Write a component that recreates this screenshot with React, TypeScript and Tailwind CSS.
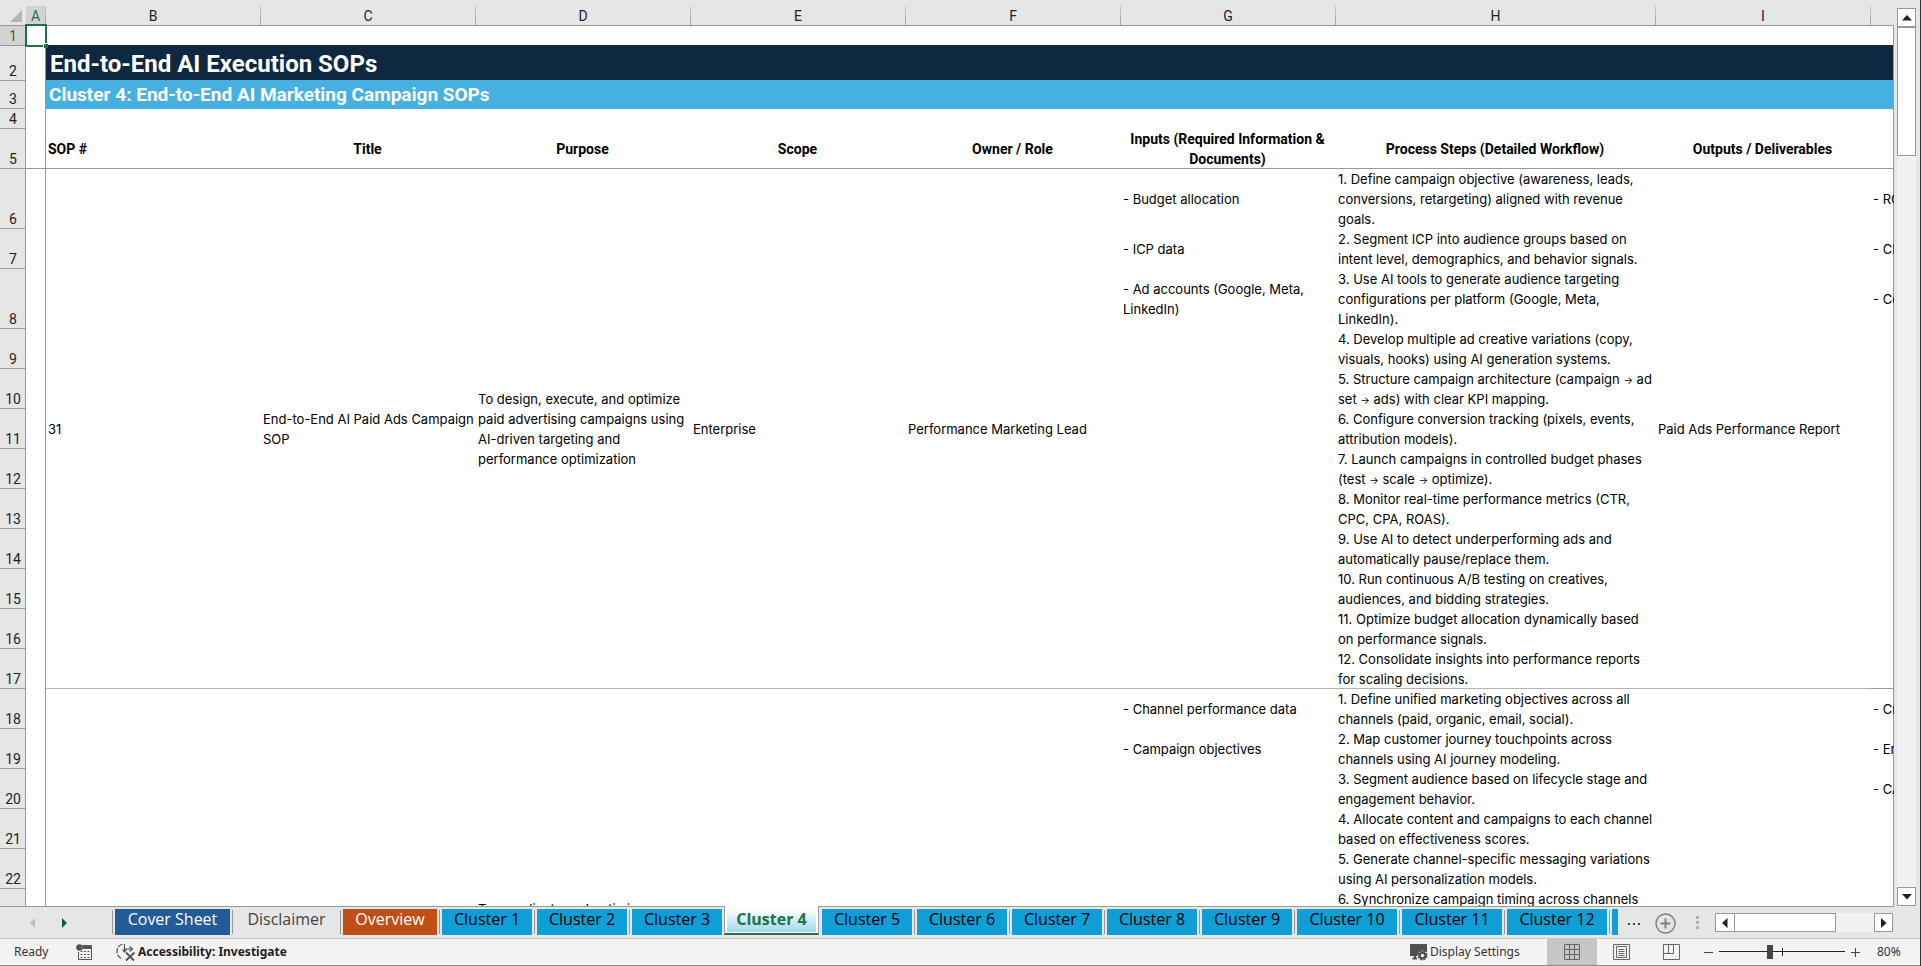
import React from 'react';
import clsx from 'clsx';

const columns = [
  { letter: 'A', width: 'w-[20px]' },
  { letter: 'B', width: 'w-[215px]' },
  { letter: 'C', width: 'w-[215px]' },
  { letter: 'D', width: 'w-[215px]' },
  { letter: 'E', width: 'w-[215px]' },
  { letter: 'F', width: 'w-[215px]' },
  { letter: 'G', width: 'w-[215px]' },
  { letter: 'H', width: 'w-[320px]' },
  { letter: 'I', width: 'w-[215px]' },
  { letter: '', width: '' },
];

const headings = [
  'SOP #',
  'Title',
  'Purpose',
  'Scope',
  'Owner / Role',
  'Inputs (Required Information &\nDocuments)',
  'Process Steps (Detailed Workflow)',
  'Outputs / Deliverables',
];

interface StepRow {
  input?: string;
  step: string;
  kpi?: string;
  tall?: boolean;
}

const paidAdsRows: StepRow[] = [
  {
    input: '- Budget allocation',
    step: '1. Define campaign objective (awareness, leads,\nconversions, retargeting) aligned with revenue\ngoals.',
    kpi: '- ROAS',
    tall: true,
  },
  { input: '- ICP data', step: '2. Segment ICP into audience groups based on\nintent level, demographics, and behavior signals.', kpi: '- CPA' },
  {
    input: '- Ad accounts (Google, Meta,\nLinkedIn)',
    step: '3. Use AI tools to generate audience targeting\nconfigurations per platform (Google, Meta,\nLinkedIn).',
    kpi: '- Conversion',
    tall: true,
  },
  { step: '4. Develop multiple ad creative variations (copy,\nvisuals, hooks) using AI generation systems.' },
  { step: '5. Structure campaign architecture (campaign → ad\nset → ads) with clear KPI mapping.' },
  { step: '6. Configure conversion tracking (pixels, events,\nattribution models).' },
  { step: '7. Launch campaigns in controlled budget phases\n(test → scale → optimize).' },
  { step: '8. Monitor real-time performance metrics (CTR,\nCPC, CPA, ROAS).' },
  { step: '9. Use AI to detect underperforming ads and\nautomatically pause/replace them.' },
  { step: '10. Run continuous A/B testing on creatives,\naudiences, and bidding strategies.' },
  { step: '11. Optimize budget allocation dynamically based\non performance signals.' },
  { step: '12. Consolidate insights into performance reports\nfor scaling decisions.' },
];

const multiChannelRows: StepRow[] = [
  {
    input: '- Channel performance data',
    step: '1. Define unified marketing objectives across all\nchannels (paid, organic, email, social).',
    kpi: '- Cross',
  },
  { input: '- Campaign objectives', step: '2. Map customer journey touchpoints across\nchannels using AI journey modeling.', kpi: '- Engagement' },
  { step: '3. Segment audience based on lifecycle stage and\nengagement behavior.', kpi: '- CAC' },
  { step: '4. Allocate content and campaigns to each channel\nbased on effectiveness scores.' },
  { step: '5. Generate channel-specific messaging variations\nusing AI personalization models.' },
  { step: '6. Synchronize campaign timing across channels' },
];

const sheets = [
  { name: 'Cover Sheet', look: 'w-[115px] bg-[#215c98] text-white' },
  { name: 'Disclaimer', look: 'w-[103px] text-[#444444]' },
  { name: 'Overview', look: 'w-[94px] bg-[#c04f15] text-white' },
  ...[1, 2, 3, 4, 5, 6, 7, 8, 9].map((n) => ({ name: `Cluster ${n}`, look: 'w-[90px] bg-[#0f9ed5] text-black' })),
  ...[10, 11, 12].map((n) => ({ name: `Cluster ${n}`, look: 'w-[100px] bg-[#0f9ed5] text-black' })),
];

const RowHeader: React.FC<{ n: number; selected?: boolean }> = ({ n, selected }) => (
  <th
    scope="row"
    className={clsx(
      'px-0 pt-0 pb-px align-bottom text-center font-normal text-[14px] leading-[18px] font-[Roboto,sans-serif] shadow-[inset_-1px_-1px_0_#999999]',
      selected ? 'bg-[#d2d2d2] text-[#217346]' : 'bg-[#e6e6e6] text-[#222222]'
    )}
  >
    {n}
  </th>
);

const MarginCell = () => <td className="p-0 shadow-[inset_-1px_0_0_#999999]" />;

// the arrow glyph is much wider than the letters around it
const StepText: React.FC<{ text: string }> = ({ text }) => (
  <>
    {text.split('→').map((part, i) => (
      <React.Fragment key={i}>
        {i > 0 && <span className="text-[10px] leading-none">→</span>}
        {part}
      </React.Fragment>
    ))}
  </>
);

const KpiCell: React.FC<{ text?: string; last?: boolean }> = ({ text, last }) => (
  <td
    className={clsx(
      'px-[2px] py-0 whitespace-pre overflow-hidden',
      last ? 'shadow-[inset_-1px_-1px_0_#999999]' : 'shadow-[inset_-1px_0_0_#999999]'
    )}
  >
    {text}
  </td>
);

const SheetGrid = () => {
  const [selected] = React.useState('A');

  return (
    <table className="w-full table-fixed border-separate border-spacing-0 bg-white text-[13px] leading-5 text-black font-[Inter,sans-serif]">
      <colgroup>
        <col className="w-[26px]" />
        {columns.map((c, i) => (
          <col key={i} className={c.width} />
        ))}
      </colgroup>
      <thead>
        <tr className="h-[26px] bg-[#e6e6e6]">
          <th className="p-0 shadow-[inset_0_-1px_0_#999999]">
            <button aria-label="Select all" className="flex h-[26px] w-full items-end justify-end pr-1 pb-1">
              <svg width="12" height="12" viewBox="0 0 12 12" fill="#b4b4b4">
                <path d="M12 0v12H0z" />
              </svg>
            </button>
          </th>
          {columns.map((c, i) => (
            <th key={i} scope="col" className="p-0 font-normal shadow-[inset_0_-1px_0_#999999]">
              <div className="flex h-[26px] pt-[6px]">
                <div
                  className={clsx(
                    'flex-1 text-center text-[14px] leading-5 font-[Roboto,sans-serif]',
                    c.letter === selected ? 'mb-px bg-[#d2d2d2] text-[#217346]' : 'text-[#222222]'
                  )}
                >
                  {c.letter}
                </div>
                {c.letter && <div className="w-px bg-linear-to-b from-[#cccccc] to-[#999999]" />}
              </div>
            </th>
          ))}
        </tr>
      </thead>
      <tbody>
        <tr className="h-[20px]">
          <RowHeader n={1} selected />
          <td className="relative p-0">
            {/* selection frame and fill handle */}
            <div className="absolute -top-[2px] -left-px h-[23px] w-[22px] border-2 border-[#217346]" />
            <div className="absolute -right-[2px] -bottom-[2px] size-[5px] border-t border-l border-white bg-[#217346]" />
          </td>
          <td colSpan={8} className="p-0 shadow-[inset_0_-1px_0_#0e2841]" />
          <td className="p-0 shadow-[inset_-1px_0_0_#999999,inset_0_-1px_0_#0e2841]" />
        </tr>
        <tr className="h-[35px]">
          <RowHeader n={2} />
          <MarginCell />
          <td colSpan={9} className="bg-[#0e2841] px-1 py-0 text-[24px] leading-8 font-bold font-[Roboto,sans-serif] text-white shadow-[inset_-1px_0_0_#999999,inset_0_-1px_0_#46b1e1]">
            End-to-End AI Execution SOPs
          </td>
        </tr>
        <tr className="h-[28px]">
          <RowHeader n={3} />
          <MarginCell />
          <td colSpan={9} className="bg-[#46b1e1] px-[3px] py-0 text-[19px] leading-6 font-bold font-[Roboto,sans-serif] text-white shadow-[inset_-1px_0_0_#999999]">
            Cluster 4: End-to-End AI Marketing Campaign SOPs
          </td>
        </tr>
        <tr className="h-[20px]">
          <RowHeader n={4} />
          <MarginCell />
          <td colSpan={9} className="p-0 shadow-[inset_-1px_0_0_#999999]" />
        </tr>
        <tr className="h-[40px]">
          <RowHeader n={5} />
          <td className="p-0 shadow-[inset_-1px_-1px_0_#999999]" />
          {headings.map((h, i) => (
            <td
              key={h}
              className={clsx(
                'py-0 pr-[2px] whitespace-pre text-[14px] leading-5 font-bold font-[Roboto,sans-serif] shadow-[inset_0_-1px_0_#999999]',
                i === 0 ? 'pl-[2px] text-left' : 'pl-0 text-center'
              )}
            >
              {h}
            </td>
          ))}
          <td className="p-0 shadow-[inset_-1px_-1px_0_#999999]" />
        </tr>

        {paidAdsRows.map((row, i) => {
          const last = i === paidAdsRows.length - 1;
          const merged = 'px-[2px] py-0 whitespace-pre align-middle shadow-[inset_0_-1px_0_#b4b4b4]';
          return (
            <tr key={row.step} className={row.tall ? 'h-[60px]' : 'h-[40px]'}>
              <RowHeader n={i + 6} />
              <MarginCell />
              {i === 0 && (
                <>
                  <td rowSpan={12} className={merged}>31</td>
                  <td rowSpan={12} className={merged}>{'End-to-End AI Paid Ads Campaign\nSOP'}</td>
                  <td rowSpan={12} className={merged}>
                    {'To design, execute, and optimize\npaid advertising campaigns using\nAI-driven targeting and\nperformance optimization'}
                  </td>
                  <td rowSpan={12} className={merged}>Enterprise</td>
                  <td rowSpan={12} className={merged}>Performance Marketing Lead</td>
                </>
              )}
              <td className={clsx('px-[2px] py-0 whitespace-pre', last && 'shadow-[inset_0_-1px_0_#b4b4b4]')}>{row.input}</td>
              <td className={clsx('px-[2px] py-0 whitespace-pre', last && 'shadow-[inset_0_-1px_0_#b4b4b4]')}>
                <StepText text={row.step} />
              </td>
              {i === 0 && <td rowSpan={12} className={merged}>Paid Ads Performance Report</td>}
              <KpiCell text={row.kpi} last={last} />
            </tr>
          );
        })}

        {multiChannelRows.map((row, i) => (
          <tr key={row.step} className="h-[40px]">
            <RowHeader n={i + 18} />
            <MarginCell />
            {i === 0 && (
              <>
                <td rowSpan={6} colSpan={2} />
                <td rowSpan={6} className="px-[2px] pt-0 pb-[10px] align-bottom whitespace-pre">
                  To coordinate and optimize
                </td>
                <td rowSpan={6} colSpan={2} />
              </>
            )}
            <td className="px-[2px] py-0 whitespace-pre">{row.input}</td>
            <td className={clsx('px-[2px] py-0 whitespace-pre', i === 5 && 'align-top')}>{row.step}</td>
            {i === 0 && <td rowSpan={6} />}
            <KpiCell text={row.kpi} />
          </tr>
        ))}
      </tbody>
    </table>
  );
};

const VerticalScrollbar = () => (
  <div className="flex w-[26px] flex-col pt-2 pr-1 pl-[3px] pb-px">
    <button aria-label="Scroll up" className="flex h-[19px] items-center justify-center border border-[#999999] bg-white">
      <svg width="10" height="6" viewBox="0 0 10 6" fill="#222222"><path d="M5 0l5 5.5H0z" /></svg>
    </button>
    <div className="flex-1 bg-[#f1f1f1]">
      <div className="h-[129px] border border-[#999999] bg-white" />
    </div>
    <button aria-label="Scroll down" className="flex h-[19px] items-center justify-center border border-[#999999] bg-white">
      <svg width="10" height="6" viewBox="0 0 10 6" fill="#222222"><path d="M0 0h10L5 5.5z" /></svg>
    </button>
  </div>
);

const SheetTabs = () => {
  const [active, setActive] = React.useState('Cluster 4');
  const activeIndex = sheets.findIndex((s) => s.name === active);

  return (
    <div className='flex h-[31px] shrink-0 text-[16px] leading-5 font-["Open_Sans",sans-serif]'>
      <div className="flex w-[112px] shrink-0 gap-[27px] pt-[11px] pl-[30px]">
        <button aria-label="Previous sheets" className="h-[10px] w-[5px]">
          <svg width="5" height="10" viewBox="0 0 5 10" fill="#c0c0c0"><path d="M5 0v10L0 5z" /></svg>
        </button>
        <button aria-label="Next sheets" className="h-[10px] w-[5px]">
          <svg width="5" height="10" viewBox="0 0 5 10" fill="#0a6332"><path d="M0 0v10l5-5z" /></svg>
        </button>
      </div>
      {sheets.map((s, i) =>
        s.name === active ? (
          <button
            key={s.name}
            className="z-10 -mt-px h-[29px] w-[95px] shrink-0 border-x border-b-2 border-x-[#999999] border-b-[#217346] bg-white px-[2px] pt-[3px] pb-px font-bold text-[#217346]"
          >
            <span className="block h-[23px] bg-linear-to-b from-white to-[#9fd8ee]">{s.name}</span>
          </button>
        ) : (
          <div key={s.name} className="flex shrink-0 gap-[2px] pt-[2px] pr-[2px]">
            <div className={clsx('mt-px h-6 w-px', i === activeIndex + 1 ? 'bg-transparent' : 'bg-[#999999]')} />
            <button onClick={() => setActive(s.name)} className={clsx('flex h-[26px] justify-center whitespace-nowrap', s.look)}>
              {s.name}
            </button>
          </div>
        )
      )}
      <div className="flex shrink-0 gap-[2px] pt-[2px]">
        <div className="mt-px h-6 w-px bg-[#999999]" />
        <div className="h-[26px] w-[6px] bg-[#0f9ed5]" />
      </div>
      <div className="ml-auto flex shrink-0 items-start pr-[27px]">
        <button aria-label="More sheets" className="mt-[16px] mr-[15px] flex gap-[3px]">
          <span className="size-[2px] bg-[#0a6332]" />
          <span className="size-[2px] bg-[#0a6332]" />
          <span className="size-[2px] bg-[#0a6332]" />
        </button>
        <button aria-label="New sheet" className="mt-[6px] mr-[20px]">
          <svg width="21" height="21" viewBox="0 0 21 21" fill="none" stroke="#808080">
            <circle cx="10.5" cy="10.5" r="9.5" strokeWidth="1.5" />
            <path d="M10.5 5.5v10M5.5 10.5h10" strokeWidth="2" />
          </svg>
        </button>
        <div className="mt-[9px] mr-4 flex flex-col gap-[2px]">
          <span className="size-[3px] bg-[#b0b0b0]" />
          <span className="size-[3px] bg-[#b0b0b0]" />
          <span className="size-[3px] bg-[#b0b0b0]" />
        </div>
        <div className="mt-[6px] flex h-[19px] w-[178px] bg-[#f1f1f1]">
          <button aria-label="Scroll left" className="flex w-[20px] items-center justify-center border border-[#999999] bg-white">
            <svg width="6" height="10" viewBox="0 0 6 10" fill="#222222"><path d="M5.5 0v10L0 5z" /></svg>
          </button>
          <div className="flex-1">
            <div className="-ml-px h-full w-[102px] border border-[#999999] bg-white" />
          </div>
          <button aria-label="Scroll right" className="flex w-[19px] items-center justify-center border border-[#999999] bg-white">
            <svg width="6" height="10" viewBox="0 0 6 10" fill="#222222"><path d="M0 0v10l5.5-5z" /></svg>
          </button>
        </div>
      </div>
    </div>
  );
};

const StatusBar = () => (
  <div className="flex h-[28px] shrink-0 items-center border-t border-b border-t-[#c6c6c6] border-b-[#8a8a8a] bg-[#f3f3f3] pl-[14px] text-[12px] text-[#333333]">
    <span className="w-[62px]">Ready</span>
    <button aria-label="Record macro" className="mr-6">
      <svg width="16" height="16" viewBox="0 0 16 16" fill="none" stroke="#555555">
        <path d="M6 1.5h9.5v14h-13V8" />
        <path d="M7 2h8v3H7z" fill="#555555" stroke="none" />
        <path d="M4.5 7.5h2M8 7.5h2M11.5 7.5h2M4.5 10.5h2M8 10.5h2M11.5 10.5h2M4.5 13.5h2M8 13.5h2M11.5 13.5h2" />
        <circle cx="3.5" cy="3.5" r="3.3" fill="#555555" stroke="none" />
      </svg>
    </button>
    <button className="flex items-center gap-[2px] font-bold text-[#222222]">
      <svg width="20" height="18" viewBox="0 0 20 18" fill="none" stroke="#555555">
        <path d="M6.5 1C3 2 1 5 1 8.5s2 6 5.500 7.500" strokeWidth="1.3" strokeDasharray="5 1.5" />
        <path d="M8.5 1v7.500M6.5 6.500l2 2.500 2-2.500M8 6h9M13.500 3.500l3 2.500-3 2.500" strokeWidth="1.2" />
        <path d="M10 9.500l8 8M18.500 9.500l-8.500 8" strokeWidth="2" />
      </svg>
      Accessibility: Investigate
    </button>

    <button className="ml-auto flex w-[138px] items-center gap-[2px]">
      <svg width="19" height="18" viewBox="0 0 19 18">
        <path d="M1 1h17v8h-6l-3 4H1z" fill="#505050" />
        <path d="M3.5 15.5H8" stroke="#505050" strokeWidth="2" />
        <path d="M6 13v3" stroke="#505050" strokeWidth="2" />
        <circle cx="13.5" cy="12.5" r="4.5" fill="#505050" stroke="#f3f3f3" />
        <circle cx="13.5" cy="12.5" r="4" fill="none" stroke="#505050" strokeWidth="2" strokeDasharray="2 1.14" />
        <circle cx="13.5" cy="12.5" r="1.7" fill="#f3f3f3" />
      </svg>
      Display Settings
    </button>
    <button aria-label="Normal view" className="flex h-[26px] w-[50px] items-center justify-center bg-[#c6c6c6]">
      <svg width="16" height="16" viewBox="0 0 16 16" fill="none" stroke="#666666">
        <path d="M.5.5h15v15H.5zM5.5.5v15M10.500.5v15M.5 5.5h15M.5 10.5h15" />
      </svg>
    </button>
    <button aria-label="Page layout" className="flex h-[26px] w-[49px] items-center justify-center">
      <svg width="17" height="16" viewBox="0 0 17 16" fill="none" stroke="#666666">
        <path d="M.5.5h16v15H.5zM3.5 2.5h10v11h-10zM5.5 5.5h6M5.5 7.5h6M5.5 9.5h6M5.5 11.5h6" />
      </svg>
    </button>
    <button aria-label="Page break preview" className="flex h-[26px] w-[50px] items-center justify-center">
      <svg width="17" height="16" viewBox="0 0 17 16" fill="none" stroke="#666666">
        <path d="M.5.5h16v15H.5zM.5 9.5h10v-9M5.5.5v9" />
      </svg>
    </button>
    <button aria-label="Zoom out" className="ml-2 flex h-5 w-[9px] items-center">
      <span className="h-px w-full bg-[#444444]" />
    </button>
    <div className="relative ml-[6px] flex h-5 w-[126px] items-center">
      <div className="absolute top-[9px] left-0 h-px w-full bg-[#222222]" />
      <div className="absolute top-[6px] left-[63px] h-[8px] w-px bg-[#222222]" />
      <input
        type="range"
        aria-label="Zoom"
        min={0}
        max={100}
        defaultValue={40}
        className="relative h-[14px] w-full appearance-none bg-transparent [&::-webkit-slider-thumb]:h-[14px] [&::-webkit-slider-thumb]:w-[6px] [&::-webkit-slider-thumb]:appearance-none [&::-webkit-slider-thumb]:bg-[#444444]"
      />
    </div>
    <button aria-label="Zoom in" className="ml-[6px]">
      <svg width="9" height="9" viewBox="0 0 9 9" stroke="#444444"><path d="M4.5 0v9M0 4.5h9" /></svg>
    </button>
    <span className="w-[60px] pl-[17px] whitespace-nowrap">80%</span>
  </div>
);

export default function App() {
  return (
    <div className='flex h-screen flex-col overflow-hidden border-r border-[#333333] bg-[#e6e6e6] font-["Noto_Sans",sans-serif]'>
      <div className="flex min-h-0 flex-1">
        <div className="min-w-0 flex-1 overflow-hidden border-b border-[#999999]">
          <SheetGrid />
        </div>
        <VerticalScrollbar />
      </div>
      <SheetTabs />
      <StatusBar />
    </div>
  );
}
